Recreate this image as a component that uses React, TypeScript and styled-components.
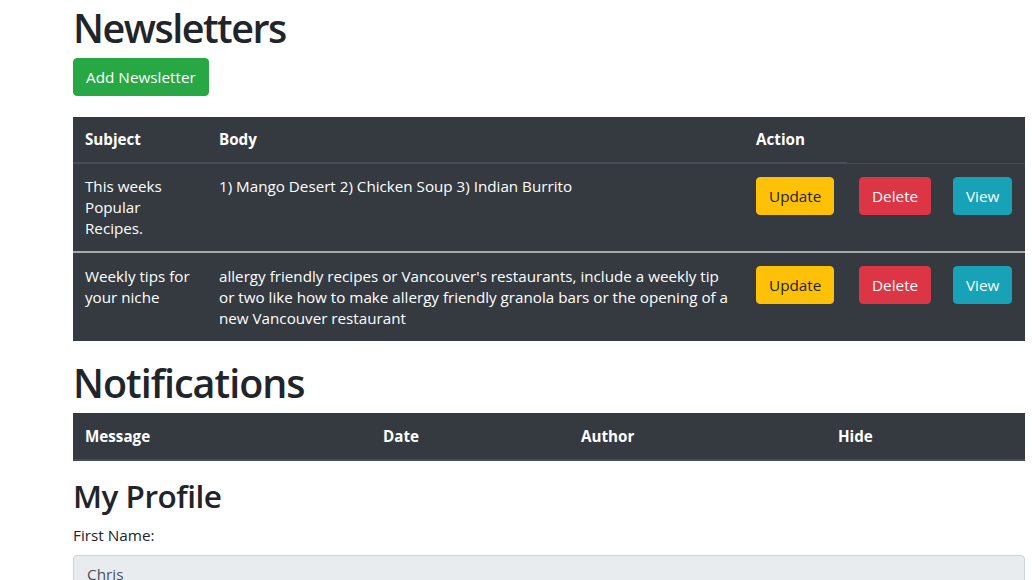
import React from "react";
import styled, { createGlobalStyle } from "styled-components";

const GlobalStyle = createGlobalStyle`
  html, body { margin: 0; padding: 0; background: #fff; }
  body {
    font-family: "Open Sans", "Noto Sans", Arial, sans-serif;
    font-size: 16px;
    line-height: 1.5;
    color: #212529;
    overflow: hidden;
  }
  * { box-sizing: border-box; }
`;

const Page = styled.div`
  padding-left: 73px;
  width: 1025px;
`;

const Title = styled.h1<{ $ls?: number }>`
  font-size: 39.5px;
  font-weight: 600;
  line-height: 48px;
  margin: 4px 0 6px;
  letter-spacing: ${(p) => p.$ls ?? -1.2}px;
`;

const SubTitle = styled.h2`
  font-size: 31.5px;
  font-weight: 600;
  line-height: 38px;
  margin: 4px 0 8px;
  letter-spacing: -0.5px;
`;

const Btn = styled.button<{ $bg: string; $fg: string }>`
  display: inline-block;
  font-family: inherit;
  font-size: 15.3px;
  line-height: 24px;
  padding: 6px 12px;
  border: 1px solid ${(p) => p.$bg};
  border-radius: 4px;
  background: ${(p) => p.$bg};
  color: ${(p) => p.$fg};
  cursor: pointer;
  vertical-align: middle;
`;

const AddBar = styled.div`
  margin: 0 0 21px;
  display: flex;
`;

const Table = styled.table`
  width: 952px;
  border-collapse: collapse;
  background: #343a40;
  color: #fff;
  margin-bottom: 18px;
  table-layout: fixed;
  font-size: 15.2px;
`;

const Th = styled.th`
  text-align: left;
  font-weight: 700;
  padding: 12px;
  line-height: 21px;
  vertical-align: bottom;
  border-bottom: 2px solid #454d55;
`;

const Td = styled.td`
  padding: 12px;
  line-height: 21px;
  vertical-align: top;
  border-top: 1px solid #454d55;
`;

const BtnTd = styled(Td)`
  padding-top: 13px;
`;

const Body = styled.tbody`
  & + & { border-top: 2px solid #a6a8aa; }
  & + & td { padding-top: 13px; }
`;

const NotifTable = styled(Table)`
  margin-bottom: 16px;
`;

const NotifTh = styled(Th)`
  padding-top: 13px;
  padding-bottom: 12px;
`;

const Label = styled.label`
  display: block;
  font-size: 15.3px;
  line-height: 24px;
  margin-bottom: 8px;
`;

const Input = styled.input`
  display: block;
  width: 952px;
  height: 38px;
  padding: 6px 13px;
  font-family: inherit;
  font-size: 15.3px;
  color: #495057;
  background: #e9ecef;
  border: 1px solid #ced4da;
  border-radius: 4px;
`;

const newsletters = [
  {
    subject: "This weeks Popular Recipes.",
    body: "1) Mango Desert 2) Chicken Soup 3) Indian Burrito",
  },
  {
    subject: "Weekly tips for your niche",
    body:
      "allergy friendly recipes or Vancouver's restaurants, include a weekly tip or two like how to make allergy friendly granola bars or the opening of a new Vancouver restaurant",
  },
];

export default function App() {
  return (
    <>
      <GlobalStyle />
      <Page>
        <Title $ls={-1.5}>Newsletters</Title>
        <AddBar>
          <Btn $bg="#28a745" $fg="#fff">Add Newsletter</Btn>
        </AddBar>
        <Table>
          <colgroup>
            <col style={{ width: 134 }} />
            <col style={{ width: 537 }} />
            <col style={{ width: 103 }} />
            <col style={{ width: 94 }} />
            <col style={{ width: 84 }} />
          </colgroup>
          <thead>
            <tr>
              <Th>Subject</Th>
              <Th>Body</Th>
              <Th>Action</Th>
            </tr>
          </thead>
          {newsletters.map((n) => (
            <Body key={n.subject}>
              <tr>
                <Td>{n.subject}</Td>
                <Td>{n.body}</Td>
                <BtnTd>
                  <Btn $bg="#ffc107" $fg="#212529">Update</Btn>
                </BtnTd>
                <BtnTd>
                  <Btn $bg="#dc3545" $fg="#fff">Delete</Btn>
                </BtnTd>
                <BtnTd>
                  <Btn $bg="#17a2b8" $fg="#fff">View</Btn>
                </BtnTd>
              </tr>
            </Body>
          ))}
        </Table>
        <Title $ls={-1}>Notifications</Title>
        <NotifTable>
          <colgroup>
            <col style={{ width: 298 }} />
            <col style={{ width: 198 }} />
            <col style={{ width: 257 }} />
            <col style={{ width: 199 }} />
          </colgroup>
          <thead>
            <tr>
              <NotifTh>Message</NotifTh>
              <NotifTh>Date</NotifTh>
              <NotifTh>Author</NotifTh>
              <NotifTh>Hide</NotifTh>
            </tr>
          </thead>
          <tbody />
        </NotifTable>
        <SubTitle>My Profile</SubTitle>
        <Label>First Name:</Label>
        <Input readOnly value="Chris" />
      </Page>
    </>
  );
}
